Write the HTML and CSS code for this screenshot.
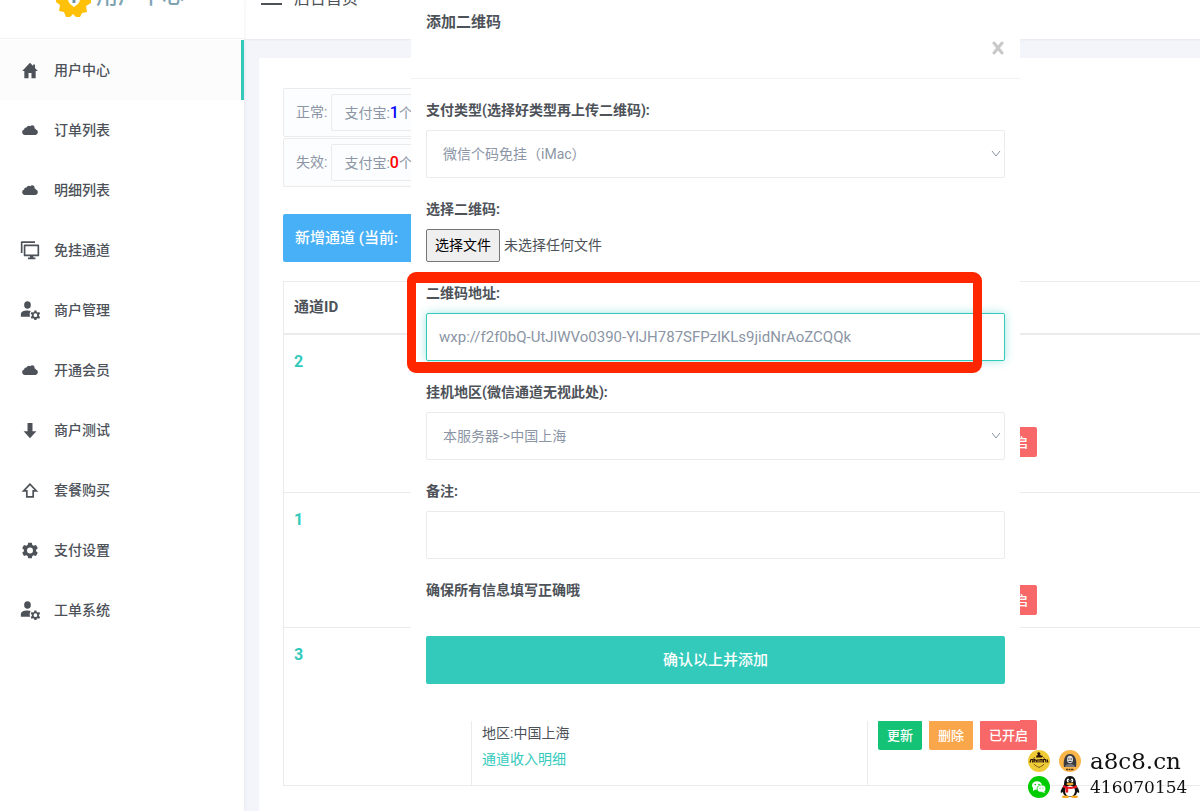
FILE: index.html
```html
<!DOCTYPE html>
<html lang="zh-CN">
<head>
<meta charset="utf-8">
<title>后台首页</title>
<meta name="viewport" content="width=device-width, initial-scale=1">
<link rel="stylesheet" href="styles.css">
</head>
<body>
<svg class="sprite" aria-hidden="true">
  <symbol id="i-home" viewBox="0 0 24 24"><path d="M12 1 1 12.600h3V23h5.900v-7.500h4.200V23H20V12.600h3L19 8.500V3.500h-2.600v2.200z"/></symbol>
  <symbol id="i-cloud" viewBox="0 0 24 24"><path d="M4.500 18.500a4 4 0 0 1-.8-7.800 3 3 0 0 1 3.400-2.900 3.600 3.600 0 0 1 5.400-1.900 3.400 3.400 0 0 1 5.900 3 3 3 0 0 1 1.900 1.800 4 4 0 0 1-.8 7.800z"/></symbol>
  <symbol id="i-screens" viewBox="0 0 24 24"><path d="M2 15.500V2.500h16M5.500 6.500h16.500v12H5.500z" fill="none" stroke="currentColor" stroke-width="2" stroke-linejoin="round"/><path d="M12 18h4v3h2.500v2h-9v-2H12z"/></symbol>
  <symbol id="i-user" viewBox="0 0 24 24"><ellipse cx="9" cy="6" rx="4" ry="4.500"/><path d="M1 20v-2.500C1 14 4 12.500 9 12.500c1.800 0 3 .2 4 .6-1.600 2-1.700 4.600-.8 6.900z"/><path fill-rule="evenodd" d="M17.300 12.500h2.400l.4 1.800 1.300.7 1.700-.6 1 2-1.300 1.300v1.400l1.300 1.300-1 2-1.700-.6-1.300.7-.4 1.500h-2.400l-.4-1.500-1.300-.7-1.700.6-1-2 1.300-1.300v-1.400l-1.300-1.300 1-2 1.700.6 1.300-.7zM18.500 16a2.200 2.200 0 1 0 0 4.400 2.200 2.200 0 0 0 0-4.400z"/></symbol>
  <symbol id="i-down" viewBox="0 0 24 24"><path d="M8.500 1.500h7V13H21l-9 10-9-10h5.500z"/></symbol>
  <symbol id="i-up" viewBox="0 0 24 24"><path d="M12 3 3 12.500h4.500V21h9v-8.500H21z" fill="none" stroke="currentColor" stroke-width="2.400"/></symbol>
  <symbol id="i-gear" viewBox="0 0 24 24"><path fill-rule="evenodd" d="M9.500 1h5l.8 3.300 1.900 1.100 3.300-1L23 8.700 20.600 11v2l2.400 2.300-2.500 4.300-3.300-1-1.900 1.100-.8 3.300h-5l-.8-3.300-1.900-1.100-3.300 1L1 15.300 3.400 13v-2L1 8.700l2.500-4.300 3.300 1 1.900-1.100zM12 7.800a4.200 4.200 0 1 0 0 8.400 4.200 4.200 0 0 0 0-8.400z"/></symbol>
</svg>

<div class="layout">
  <aside class="sidebar">
    <div class="brand">
      <svg class="brand-logo" viewBox="0 0 36 36"><path d="M15 1h6l2 4 5-2 4 4-2 5 5 2v7l-5 3 1 6-5 1-2 4h-4l-3-3-3 3h-4l-2-5-5-1 1-6-4-3v-6l5-3-2-5 4-4 5 2z" fill="#ffc107"/><path d="M12 13h12v4c0 4-3 6-6 8-3-2-6-4-6-8z" fill="#fff"/><path d="M18 13v8" stroke="#6d94a4" stroke-width="3"/></svg>
      <span class="brand-name">用户中心</span>
    </div>
    <nav class="menu">
      <a class="menu-item active" href="#"><svg class="icon"><use href="#i-home"/></svg>用户中心</a>
      <a class="menu-item" href="#"><svg class="icon"><use href="#i-cloud"/></svg>订单列表</a>
      <a class="menu-item" href="#"><svg class="icon"><use href="#i-cloud"/></svg>明细列表</a>
      <a class="menu-item" href="#"><svg class="icon large"><use href="#i-screens"/></svg>免挂通道</a>
      <a class="menu-item" href="#"><svg class="icon large"><use href="#i-user"/></svg>商户管理</a>
      <a class="menu-item" href="#"><svg class="icon"><use href="#i-cloud"/></svg>开通会员</a>
      <a class="menu-item" href="#"><svg class="icon"><use href="#i-down"/></svg>商户测试</a>
      <a class="menu-item" href="#"><svg class="icon"><use href="#i-up"/></svg>套餐购买</a>
      <a class="menu-item" href="#"><svg class="icon"><use href="#i-gear"/></svg>支付设置</a>
      <a class="menu-item" href="#"><svg class="icon large"><use href="#i-user"/></svg>工单系统</a>
    </nav>
  </aside>

  <main class="main">
    <header class="topbar">
      <span class="burger"></span>
      <span class="page-name">后台首页</span>
    </header>

    <section class="panel">
      <div class="stats">
        <div class="stat"><span>正常:</span><span class="stat-value">支付宝:<b class="ok">1</b>个</span></div>
        <div class="stat"><span>失效:</span><span class="stat-value">支付宝:<b class="bad">0</b>个</span></div>
      </div>
      <button class="add-channel" type="button">新增通道 (当前:</button>

      <table class="channels">
        <colgroup><col class="col-id"><col class="col-info"><col></colgroup>
        <thead><tr><th>通道ID</th><th></th><th></th></tr></thead>
        <tbody>
          <tr class="row-tall">
            <td class="id">2</td><td></td>
            <td class="actions"><div class="buttons"><button class="btn green">更新</button><button class="btn orange">删除</button><button class="btn red">已开启</button></div></td>
          </tr>
          <tr class="row-short">
            <td class="id">1</td><td></td>
            <td class="actions"><div class="buttons"><button class="btn green">更新</button><button class="btn orange">删除</button><button class="btn red">已开启</button></div></td>
          </tr>
          <tr class="row-tall">
            <td class="id">3</td>
            <td class="info">地区:中国上海<br><a href="#">通道收入明细</a></td>
            <td class="actions"><div class="buttons"><button class="btn green">更新</button><button class="btn orange">删除</button><button class="btn red">已开启</button></div></td>
          </tr>
        </tbody>
      </table>
    </section>

    <form class="modal">
      <div class="modal-head">
        <h2>添加二维码</h2>
        <button class="close" type="button" aria-label="关闭"><svg viewBox="0 0 12 14"><path d="M2 2l8 10M10 2 2 12"/></svg></button>
      </div>
      <div class="modal-body">
        <div class="field">
          <label for="type">支付类型(选择好类型再上传二维码):</label>
          <div class="select-wrap">
            <select id="type" class="control"><option>微信个码免挂（iMac）</option></select>
            <svg class="chevron" viewBox="0 0 10 8"><path d="M1 1l4 5 4-5"/></svg>
          </div>
        </div>
        <div class="field">
          <label for="file">选择二维码:</label>
          <div class="file-row">
            <input id="file" class="file-input" type="file">
            <label class="file-button" for="file">选择文件</label>
            <span>未选择任何文件</span>
          </div>
        </div>
        <div class="field marked">
          <label for="url">二维码地址:</label>
          <input id="url" class="control focused" type="text" value="wxp://f2f0bQ-UtJlWVo0390-YlJH787SFPzlKLs9jidNrAoZCQQk">
        </div>
        <div class="field">
          <label for="region">挂机地区(微信通道无视此处):</label>
          <div class="select-wrap">
            <select id="region" class="control"><option>本服务器-&gt;中国上海</option></select>
            <svg class="chevron" viewBox="0 0 10 8"><path d="M1 1l4 5 4-5"/></svg>
          </div>
        </div>
        <div class="field">
          <label for="note">备注:</label>
          <input id="note" class="control" type="text">
        </div>
        <p class="reminder">确保所有信息填写正确哦</p>
        <button class="submit" type="button">确认以上并添加</button>
      </div>
    </form>
  </main>
</div>

<div class="contact">
  <svg viewBox="0 0 22 22"><circle cx="11" cy="11" r="11" fill="#efcb36"/><path d="M9 3l2-1 1.500 1.500L12 5l3 1-1 1.500H8L8.500 5.500 10 5z" fill="#2b1508"/><path d="M2 12.500l1-3 2 0-.5 3M6 12.500l.5-3 2 1-.5 2M10 12.500v-3.500M12 12.500v-3l2 0v3M15.500 12.500v-3l2 0 .5 3M19 9.500l1 3" fill="none" stroke="#2b1508" stroke-width="1.200"/><path d="M6.500 7l-1 2M15.500 7l1 2M6 14c1 2 3 2 5 3.500 2-1.500 4-1.500 5-3.500" fill="none" stroke="#7a5a18"/></svg>
  <svg viewBox="0 0 22 22"><circle cx="11" cy="11" r="11" fill="#fbb64a"/><path d="M5 17c-1-5 0-13 6-13s7 8 6 13z" fill="#3b3b3f"/><ellipse cx="11" cy="9.500" rx="3" ry="3.800" fill="#ddd"/><path d="M9 9h1.500M11.500 9H13M9.500 11.500h3" stroke="#333"/><path d="M6 17c1-3 3-3 5-3s4 0 5 3z" fill="#77777b"/><path d="M7 19.500h8" stroke="#553b18" stroke-width="1.500" stroke-dasharray="2 .5"/></svg>
  <span class="site">a8c8.cn</span>
  <svg viewBox="0 0 22 22"><circle cx="11" cy="11" r="11" fill="#0c0"/><ellipse cx="9" cy="9.500" rx="5" ry="4.200" fill="#fff"/><path d="M5 12l0 3 3-2z" fill="#fff"/><ellipse cx="13.500" cy="12.700" rx="4.300" ry="3.600" fill="#fff" stroke="#0c0" stroke-width=".7"/><path d="M16 15l1 2-3-1z" fill="#fff"/><g fill="#0c0"><circle cx="7.300" cy="8.500" r=".8"/><circle cx="11" cy="8.500" r=".8"/><circle cx="12" cy="12" r=".6"/><circle cx="15" cy="12" r=".6"/></g></svg>
  <svg viewBox="0 0 22 22"><path d="M5 9C5 3 7 0 11 0s6 3 6 9c2 3 4 6 3 8l-2-1c0 3-3 5-7 5s-7-2-7-5l-2 1C1 15 3 12 5 9z" fill="#111"/><ellipse cx="11" cy="15" rx="5" ry="5.500" fill="#fff"/><ellipse cx="9" cy="4.500" rx="1.300" ry="2" fill="#fff"/><ellipse cx="13" cy="4.500" rx="1.300" ry="2" fill="#fff"/><circle cx="9.400" cy="4.800" r=".6"/><circle cx="12.600" cy="4.800" r=".6"/><ellipse cx="11" cy="8" rx="3.500" ry="1.200" fill="#f5a623"/><path d="M4.500 9c4 2.500 9 2.500 13 0l.7 2.500c-3 1.500-6 1.500-9 1.300v3.700H6.500V12.500l-2.500-1z" fill="#e6151f"/><ellipse cx="6.500" cy="20.700" rx="3.500" ry="1.300" fill="#f5a623"/><ellipse cx="15.500" cy="20.700" rx="3.500" ry="1.300" fill="#f5a623"/></svg>
  <span class="number">416070154</span>
</div>
</body>
</html>
```
FILE: styles.css
```css
* { box-sizing: border-box; }

body {
  margin: 0;
  background: #f4f5fa;
  color: #4d5259;
  font: 14px/21px Roboto, "Noto Sans CJK SC", sans-serif;
  overflow-x: hidden;
}

button, input, select { font: inherit; }
a { color: #33cabb; text-decoration: none; }
.sprite { position: absolute; width: 0; height: 0; }

.layout { display: flex; min-height: 100vh; }

/* Sidebar */
.sidebar {
  flex: none;
  width: 244px;
  background: #fff;
  box-shadow: 0 0 4px rgba(0, 0, 0, .08);
  z-index: 1;
}

.brand, .topbar {
  display: flex;
  align-items: flex-end;
  height: 39px;
  overflow: hidden;
}

.brand {
  gap: 4px;
  padding: 0 56px 20px;
  border-bottom: 1px solid #f1f2f3;
}

.brand-logo { flex: none; width: 36px; height: 36px; }

.brand-name {
  margin-bottom: 10px;
  color: #7fa3b3;
  font-size: 22px;
  font-weight: 500;
  line-height: 24px;
  white-space: nowrap;
}

.menu { padding-top: 1px; }

.menu-item {
  display: flex;
  align-items: center;
  gap: 14px;
  height: 60px;
  padding: 0 20px;
  color: #4d5259;
  font-weight: 500;
}

.menu-item.active {
  background: #fcfcfc;
  border-right: 3px solid #33cabb;
}

.icon {
  width: 20px;
  height: 17px;
  fill: currentColor;
}

.icon.large { height: 20px; }

/* Main area */
.main {
  position: relative;
  flex: 1;
  min-width: 0;
  display: flex;
  flex-direction: column;
}

.topbar {
  gap: 12px;
  padding: 0 17px 30px;
  background: #fff;
  box-shadow: 0 1px 2px rgba(0, 0, 0, .05);
}

.burger {
  flex: none;
  width: 21px;
  height: 16px;
  margin-bottom: 4px;
  border: solid #4d5259;
  border-width: 2px 0;
}

.page-name { font-size: 16px; white-space: nowrap; }

.panel {
  flex: 1;
  margin: 19px 0 0 15px;
  padding: 30px 0 25px 24px;
  background: #fff;
}

.stats { width: 75%; }

.stat {
  display: flex;
  gap: 4px;
  height: 49px;
  margin-bottom: 1px;
  padding: 5px 12px;
  background: #fcfdfe;
  border: 1px solid #ebebeb;
  border-radius: 2px;
  color: #8b95a5;
  line-height: 36px;
}

.stat-value {
  flex: 1;
  padding: 0 12px;
  border: 1px solid #ebebeb;
  border-radius: 2px;
}

.stat b { font-size: 16px; font-weight: 500; }
.ok { color: #00f; }
.bad { color: #f00; }

.add-channel {
  display: block;
  width: 240px;
  height: 48px;
  margin: 27px 0 19px;
  padding: 0 12px;
  border: 0;
  border-radius: 2px;
  background: #48b0f7;
  color: #fff;
  font-size: 15px;
  font-weight: 500;
  text-align: left;
}

.channels {
  width: 100%;
  border-collapse: separate;
  border-spacing: 0;
  border: 1px solid #ebebeb;
  border-width: 1px 0 0 1px;
  table-layout: fixed;
}

.col-id { width: 187px; }
.col-info { width: 396px; }

.channels th {
  height: 53px;
  padding: 0 10px;
  border-bottom: 2px solid #ebebeb;
  font-size: 15px;
  text-align: left;
}

.channels td {
  padding: 16px 10px 0;
  border-bottom: 1px solid #ebebeb;
  vertical-align: top;
}

.channels td + td { border-left: 1px solid #ebebeb; }
.row-tall { height: 158px; }
.row-short { height: 135px; }
.channels .id { color: #33cabb; font-size: 16px; font-weight: 700; }
.channels .info { padding-top: 92px; line-height: 26px; }
.channels .actions { padding-top: 92px; }
.buttons { display: flex; gap: 7px; }

.btn {
  height: 30px;
  padding: 0 9px;
  border: 0;
  border-radius: 2px;
  color: #fff;
  font-size: 13px;
  font-weight: 500;
}

.green { background: #15c377; }
.orange { background: #faa64b; }
.red { background: #f96868; }

/* Dialog */
.modal {
  position: absolute;
  top: 0;
  left: 167px;
  right: 180px;
  background: #fff;
}

.modal-head {
  display: flex;
  justify-content: space-between;
  height: 79px;
  padding: 12px 15px;
  border-bottom: 1px solid #f1f2f3;
}

.modal-head h2 { margin: 0; font-size: 15px; line-height: 21px; }

.close {
  align-self: flex-end;
  height: 36px;
  padding: 0 1px;
  border: 0;
  background: none;
}

.close svg {
  display: block;
  width: 12px;
  height: 14px;
  fill: none;
  stroke: #c8c8c8;
  stroke-width: 3;
  stroke-linecap: round;
}

.modal-body { padding: 21px 15px 37px; }
.field { margin-bottom: 21px; }
.field > label { display: block; margin-bottom: 9px; font-weight: 700; }

.control {
  display: block;
  width: 100%;
  height: 48px;
  padding: 0 12px;
  border: 1px solid #ebebeb;
  border-radius: 2px;
  outline: 0;
  background: #fff;
  color: #8b95a5;
  font-size: 15px;
}

select.control { padding: 0 16px; appearance: none; font-size: 14px; }
.focused { border-color: #33cabb; box-shadow: 0 0 10px rgba(51, 202, 187, .45); }
.select-wrap { position: relative; }

.chevron {
  position: absolute;
  top: 20px;
  right: 4px;
  width: 10px;
  height: 8px;
  fill: none;
  stroke: #8b95a5;
  pointer-events: none;
}

.file-row { display: flex; align-items: center; gap: 4px; }
.file-input { position: absolute; width: 1px; height: 1px; opacity: 0; }

.file-button {
  height: 33px;
  padding: 0 8px;
  border: 1px solid #767676;
  border-radius: 2px;
  background: #efefef;
  color: #000;
  line-height: 31px;
}

/* Highlight frame drawn around the address field */
.marked { position: relative; }

.marked::after {
  content: "";
  position: absolute;
  inset: -11px 23px -12px -19px;
  border: solid #ff2600;
  border-width: 11px 9px;
  border-radius: 9px;
  pointer-events: none;
}

.reminder { margin: 0 0 35px; font-weight: 700; }

.submit {
  display: block;
  width: 100%;
  height: 48px;
  border: 0;
  border-radius: 2px;
  background: #33cabb;
  color: #fff;
  font-size: 15px;
  font-weight: 500;
}

/* Contact card */
.contact {
  position: fixed;
  right: 10px;
  bottom: 13px;
  z-index: 2;
  display: grid;
  grid-template-columns: 22px 22px 100px;
  gap: 4px 9px;
  align-items: center;
  color: #111;
  font-family: "DejaVu Serif", serif;
  line-height: 22px;
}

.contact svg { width: 22px; height: 22px; }
.site { font-size: 23px; }
.number { font-size: 17px; }
```
